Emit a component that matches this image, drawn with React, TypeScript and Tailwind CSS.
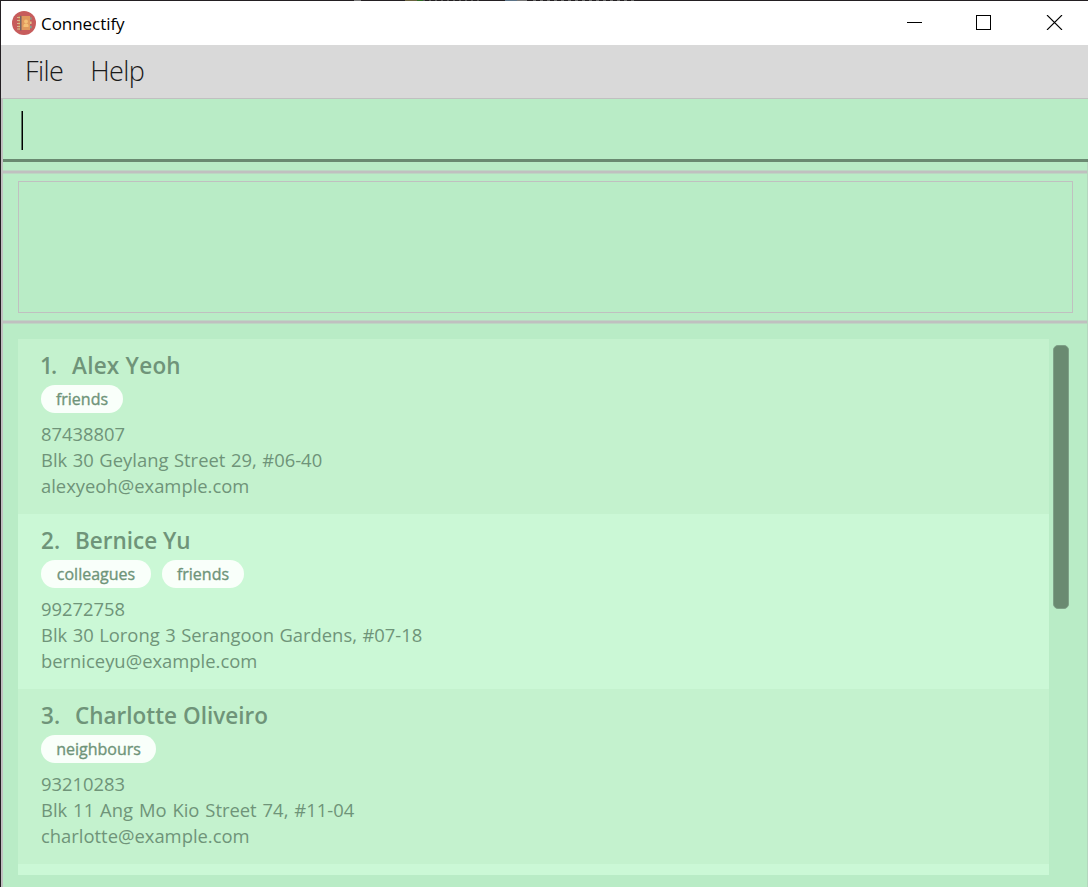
type Person = {
  name: string;
  indexClass: string;
  nameClass: string;
  addressClass: string;
  tags: { label: string; width: string }[];
  phone: string;
  address: string;
  email: string;
};

const people: Person[] = [
  {
    name: 'Alex Yeoh',
    indexClass: 'w-[31px] -indent-px tracking-[-2px]',
    nameClass: 'tracking-[0.250px]',
    addressClass: '[word-spacing:0.800px]',
    tags: [{ label: 'friends', width: 'w-[82px]' }],
    phone: '87438807',
    address: 'Blk 30 Geylang Street 29, #06-40',
    email: 'alexyeoh@example.com',
  },
  {
    name: 'Bernice Yu',
    indexClass: 'w-[34px]',
    nameClass: '',
    addressClass: '[word-spacing:0.700px]',
    tags: [
      { label: 'colleagues', width: 'w-[110px]' },
      { label: 'friends', width: 'w-[82px]' },
    ],
    phone: '99272758',
    address: 'Blk 30 Lorong 3 Serangoon Gardens, #07-18',
    email: 'berniceyu@example.com',
  },
  {
    name: 'Charlotte Oliveiro',
    indexClass: 'w-[34px]',
    nameClass: '',
    addressClass: '[word-spacing:1.150px]',
    tags: [{ label: 'neighbours', width: 'w-[115px]' }],
    phone: '93210283',
    address: 'Blk 11 Ang Mo Kio Street 74, #11-04',
    email: 'charlotte@example.com',
  },
];

function AppIcon() {
  return (
    <svg width="24" height="24" viewBox="0 0 24 24" className="shrink-0">
      <circle cx="12" cy="12" r="12" fill="#c75c5c" />
      <path d="M6.500 5h3v14h-3z" fill="#c9814f" />
      <path d="M9.500 5h8.500v14H9.500z" fill="#e0995e" />
      <path d="M8.300 4.700h1v14.800h-1z" fill="#4f5d73" />
      <path d="M5 6.500h3M5 9.500h3M5 12.500h3M5 15.500h3M5 18h3" stroke="#d8b990" strokeWidth="1.200" />
      <path d="M18 7.500h1.600" stroke="#8f9a86" strokeWidth="2.500" />
      <path d="M18 11.800h1.600" stroke="#dfc08c" strokeWidth="2.500" />
      <path d="M18 16h1.600" stroke="#77a89a" strokeWidth="2.500" />
      <circle cx="14" cy="10.500" r="1.900" fill="#f3c077" />
      <path d="M11.500 16v-1.500q0-2 2.500-2t2.500 2V16z" fill="#f3c077" />
    </svg>
  );
}

function TitleBar() {
  return (
    <header className="flex h-[44px] shrink-0 items-center bg-white pl-[11px]">
      <AppIcon />
      <span className="ml-[5px] grow pt-[2px] text-[17px] leading-6 tracking-[-0.050px] text-black">Connectify</span>
      <div className="flex items-center gap-[54px] pb-px pr-[25px]">
        <svg width="15" height="15" viewBox="0 0 15 15" shapeRendering="crispEdges">
          <path d="M0 7.500h15" stroke="#000" />
        </svg>
        <svg width="15" height="15" viewBox="0 0 15 15" shapeRendering="crispEdges">
          <rect x="0.500" y="0.500" width="14" height="14" fill="none" stroke="#000" />
        </svg>
        <svg width="18" height="15" viewBox="-2 0 18 15">
          <path d="M0 0l15 15M15 0L0 15" stroke="#000" strokeWidth="1.100" />
        </svg>
      </div>
    </header>
  );
}

function Divider() {
  return <div className="h-[4px] shrink-0 border-y border-[#bcd6c3] bg-[#c0c0c0]" />;
}

function PersonCard({ person, index }: { person: Person; index: number }) {
  return (
    <article className={`h-[175px] shrink-0 pl-[23px] pt-[11px] text-[#6f9479] ${index % 2 ? 'bg-[#cbf8d6]' : 'bg-[#c4f2ce]'}`}>
      <h2 className="flex h-8 text-[22.500px] font-semibold leading-8">
        <span className={person.indexClass}>{index + 1}.</span>
        <span className={person.nameClass}>{person.name}</span>
      </h2>
      <div className="mt-[3px] flex gap-[11px]">
        {person.tags.map((tag) => (
          <span
            key={tag.label}
            className={`flex h-7 items-center justify-center rounded-full bg-[#f9fffa] pb-px text-[16px] [-webkit-text-stroke:0.350px] ${tag.width}`}
          >
            {tag.label}
          </span>
        ))}
      </div>
      <div className="mt-[8px] text-[18.400px] leading-[26px]">
        <p>{person.phone}</p>
        <p className={person.addressClass}>{person.address}</p>
        <p>{person.email}</p>
      </div>
    </article>
  );
}

export default function App() {
  return (
    <div className="flex h-[887px] w-[1088px] flex-col overflow-hidden border-l border-[#231f22] bg-white font-['Open_Sans','Noto_Sans',sans-serif]">
      <div className="flex h-px shrink-0 bg-[#231f22]">
        <div className="ml-[353px] w-[7px] bg-[#777]" />
        <div className="ml-[44px] w-[12px] bg-[#6b6340]" />
        <div className="w-[6px] bg-[#2f6b25]" />
        <div className="w-[60px] bg-[repeating-linear-gradient(90deg,#555_0_2px,#231f22_2px_6px)]" />
        <div className="ml-[22px] w-[12px] bg-[#5d7488]" />
        <div className="w-[10px] bg-[#777]" />
        <div className="ml-[6px] w-[104px] bg-[repeating-linear-gradient(90deg,#666_0_3px,#231f22_3px_7px)]" />
      </div>
      <TitleBar />
      <nav className="flex h-[53px] shrink-0 items-center gap-[27px] bg-[#d9d9d9] pl-[24px] text-[27px] font-light tracking-[-0.600px] text-[#1a1a1a]">
        <span>File</span>
        <span>Help</span>
      </nav>
      <main className="flex min-h-0 grow flex-col border-l-2 border-t border-[#c0c0c0] bg-[#b9ecc6]">
        <div className="flex h-[63px] shrink-0 border-b-[3px] border-[#6a8a71] pl-[18px] pt-[12px]">
          <div className="h-[39px] w-[2px] border-l border-[#5c7663] bg-black" />
        </div>
        <div className="flex grow flex-col border-r border-[#b5d6be] pt-[8px]">
          <Divider />
          <section className="h-[146px] shrink-0 px-[15px] pt-[7px]">
            <div className="h-[132px] w-[1055px] border border-[#c0c0c0]" />
          </section>
          <Divider />
          <section className="mt-[15px] flex h-[536px] shrink-0 pl-[15px]">
            <div className="flex w-[1031px] flex-col overflow-hidden">
              {people.map((person, i) => (
                <PersonCard key={person.name} person={person} index={i} />
              ))}
              <div className="h-[11px] shrink-0 bg-[#cbf8d6]" />
            </div>
            <div className="ml-[4px] mt-[6px] h-[264px] w-[16px] rounded-[5px] border border-[#7ea187] bg-[#6a8a71]" />
          </section>
        </div>
      </main>
    </div>
  );
}
